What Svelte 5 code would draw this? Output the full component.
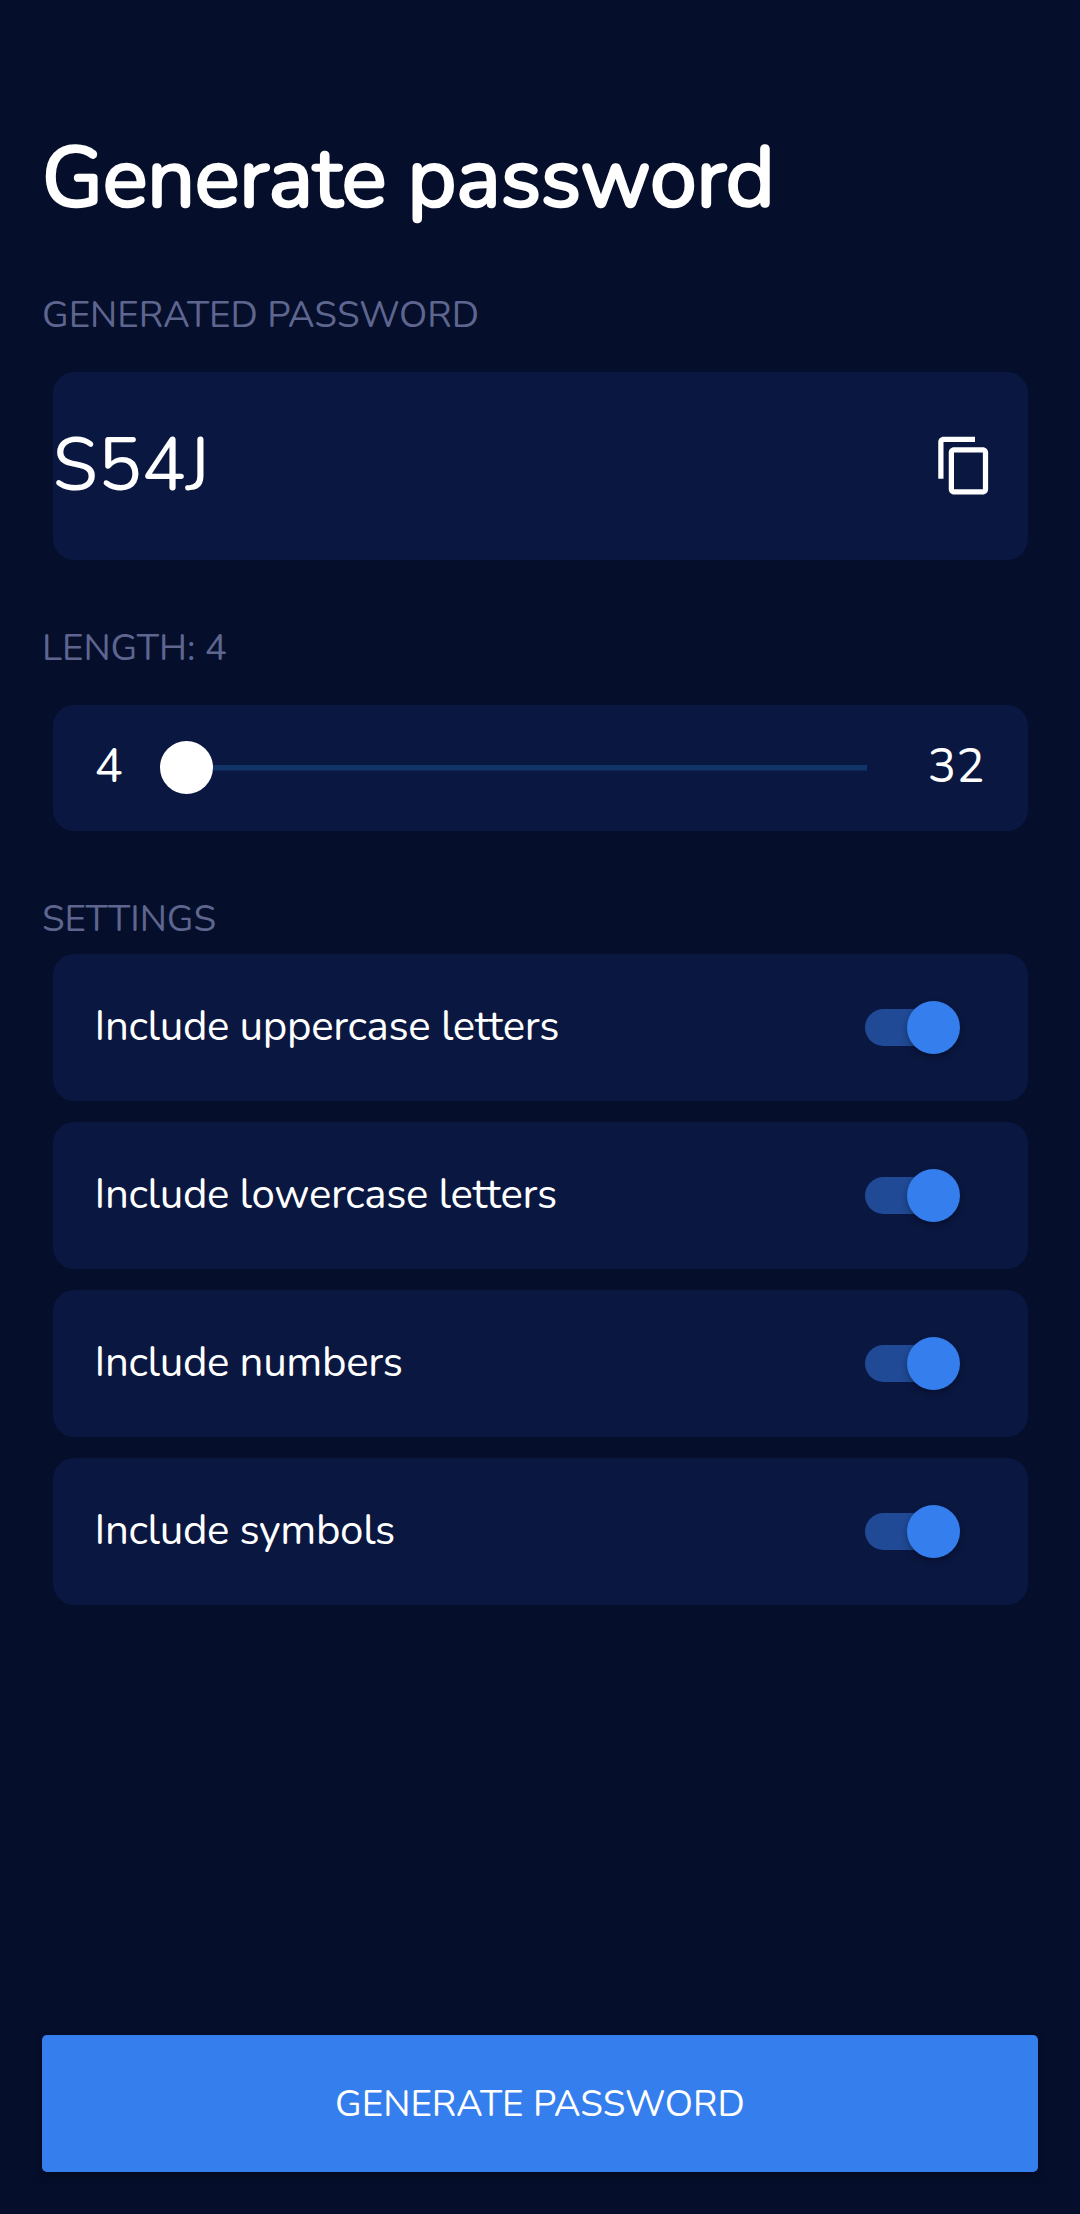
<script>
  let length = $state(4);
  let password = $state('S54J');
  let settings = $state([
    { id: 'upper', label: 'Include uppercase letters', on: true, chars: 'ABCDEFGHIJKLMNOPQRSTUVWXYZ' },
    { id: 'lower', label: 'Include lowercase letters', on: true, chars: 'abcdefghijklmnopqrstuvwxyz' },
    { id: 'numbers', label: 'Include numbers', on: true, chars: '0123456789' },
    { id: 'symbols', label: 'Include symbols', on: true, chars: '!@#$%^&*()' }
  ]);

  function generate() {
    const pool = settings.filter((s) => s.on).map((s) => s.chars).join('');
    password = Array.from({ length: pool ? length : 0 }, () => pool[Math.floor(Math.random() * pool.length)]).join('');
  }
</script>

<main>
  <h1>Generate password</h1>

  <h2 class="generated">GENERATED PASSWORD</h2>
  <section class="card result">
    <span class="password">{password}</span>
    <button class="copy" aria-label="Copy" onclick={() => navigator.clipboard?.writeText(password)}>
      <svg viewBox="0 0 24 24" fill="currentColor">
        <path d="M16 1H4c-1.1 0-2 .9-2 2v14h2V3h12V1zm3 4H8c-1.1 0-2 .9-2 2v14c0 1.1.9 2 2 2h11c1.1 0 2-.9 2-2V7c0-1.1-.9-2-2-2zm0 16H8V7h11v14z" />
      </svg>
    </button>
  </section>

  <h2 class="length">LENGTH: {length}</h2>
  <section class="card range">
    <span class="bound">4</span>
    <input type="range" min="4" max="32" aria-label="Length" bind:value={length} />
    <span class="bound max">32</span>
  </section>

  <h2 class="settings">SETTINGS</h2>
  <div class="list">
    {#each settings as s (s.id)}
      <section class="card row">
        <span class="name">{s.label}</span>
        <button class="switch" class:on={s.on} role="switch" aria-checked={s.on} aria-label={s.label} onclick={() => (s.on = !s.on)}>
          <span class="knob"></span>
        </button>
      </section>
    {/each}
  </div>

  <button class="generate" onclick={generate}>GENERATE PASSWORD</button>
</main>

<style>
  :global(body) {
    background: #050e2b;
  }
  main {
    box-sizing: border-box;
    display: flex;
    flex-direction: column;
    height: 2214px;
    padding: 129px 42px 42px;
    background: #050e2b;
    color: #fff;
    font-family: Nunito, Lato, sans-serif;
  }
  button {
    padding: 0;
    border: 0;
    background: none;
    color: inherit;
    font: inherit;
  }
  h1 {
    margin: 0;
    font-size: 84px;
    line-height: 100px;
    font-weight: 400;
    letter-spacing: -0.22px;
    -webkit-text-stroke: 2.7px #fff;
    white-space: nowrap;
  }
  h2 {
    margin: 0;
    font-size: 36.75px;
    line-height: 48px;
    font-weight: 400;
    color: #5e668f;
  }
  .generated {
    margin-top: 62px;
  }
  .length {
    margin-top: 64px;
  }
  .settings {
    margin-top: 64.5px;
  }
  .card {
    box-sizing: border-box;
    display: flex;
    align-items: center;
    margin: 0 10.5px;
    border-radius: 21px;
    background: #0a1740;
  }
  .result {
    height: 188.5px;
    margin-top: 32.5px;
    justify-content: space-between;
    padding-right: 31.5px;
  }
  .password {
    font-size: 73.5px;
    line-height: 88px;
  }
  .copy {
    width: 63px;
    height: 63px;
  }
  .copy svg {
    display: block;
    width: 100%;
    height: 100%;
  }
  .range {
    height: 125.5px;
    margin-top: 33px;
    padding: 0 43px 0 42px;
  }
  .bound {
    width: 29px;
    padding-bottom: 2px;
    font-size: 47.25px;
    line-height: 56px;
  }
  .max {
    width: auto;
    margin-left: auto;
  }
  input {
    -webkit-appearance: none;
    appearance: none;
    width: 734px;
    height: 53px;
    margin: 0 0 0 36.5px;
    background: linear-gradient(#113469, #113469) 26px 50% / 681px 5.5px no-repeat;
    outline: none;
  }
  input::-webkit-slider-thumb {
    -webkit-appearance: none;
    width: 53px;
    height: 53px;
    border-radius: 50%;
    background: #fff;
  }
  .list {
    display: flex;
    flex-direction: column;
    gap: 21px;
    margin-top: 11px;
  }
  .row {
    height: 147px;
    padding: 0 68px 0 42px;
    justify-content: space-between;
  }
  .name {
    padding-bottom: 1px;
    font-size: 42px;
    line-height: 56px;
    letter-spacing: -0.33px;
  }
  .switch {
    display: flex;
    align-items: center;
    width: 95px;
    height: 37px;
    border-radius: 19px;
    background: #2b3658;
  }
  .switch.on {
    justify-content: flex-end;
    background: linear-gradient(90deg, #204a95 70px, transparent 70px);
  }
  .knob {
    width: 53px;
    height: 53px;
    border-radius: 50%;
    background: #999fb5;
    box-shadow: 0 3px 7px rgba(0, 0, 0, 0.32);
  }
  .on .knob {
    background: #357eed;
  }
  .generate {
    flex: none;
    height: 136.7px;
    margin-top: auto;
    border-radius: 5px;
    background: #357eed;
    box-shadow: 0 4px 8px rgba(0, 0, 0, 0.3);
    font-size: 36.75px;
  }
</style>
